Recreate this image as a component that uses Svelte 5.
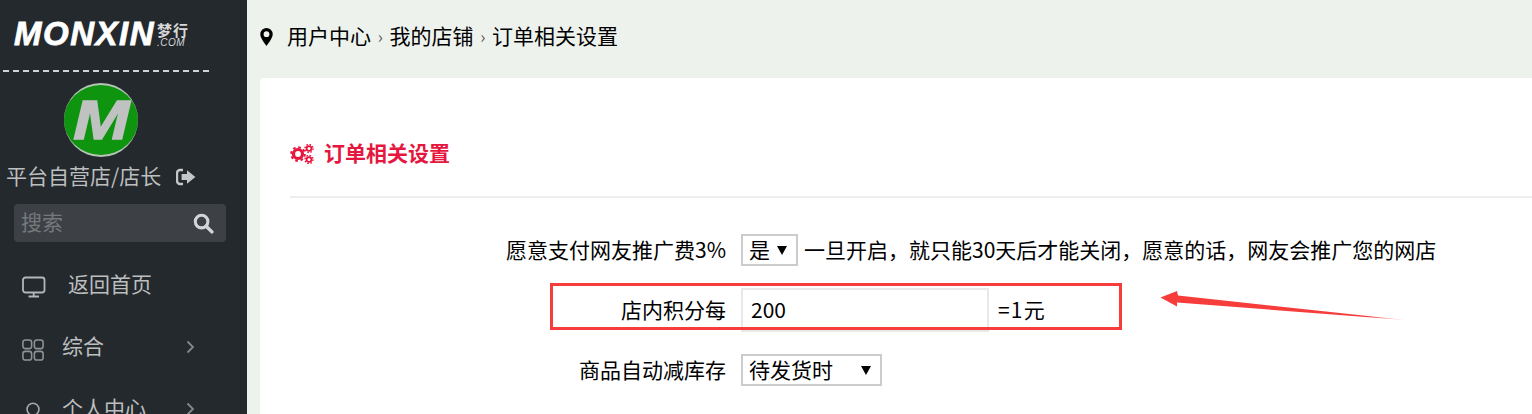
<script lang="ts">
  const nav = [
    { label: '综合', icon: 'grid', arrow: true },
    { label: '个人中心', icon: 'user', arrow: true }
  ];
</script>

<div class="page">
  <aside class="sidebar">
    <div class="logo">
      <span class="logo-word">MONXIN</span>
      <span class="logo-side">
        <span class="logo-cn">梦行</span>
        <span class="logo-com">.COM</span>
      </span>
    </div>
    <div class="dash"></div>
    <div class="avatar"><span>M</span></div>
    <div class="user-row">
      <span>平台自营店/店长</span>
      <svg class="logout" viewBox="0 0 20 18" width="20" height="18" aria-hidden="true">
        <path d="M7 2H4a3 3 0 0 0-3 3v8a3 3 0 0 0 3 3h3" fill="none" stroke="#c4c6c7" stroke-width="2.4" />
        <path d="M11 2.2 19.4 9 11 15.8V12H5.6V6H11z" fill="#c4c6c7" />
      </svg>
    </div>
    <div class="search">
      <span>搜索</span>
      <svg viewBox="0 0 22 22" width="21" height="21" aria-hidden="true">
        <circle cx="9" cy="9" r="6.6" fill="none" stroke="#d4d5d6" stroke-width="3.2" />
        <path d="m13.8 13.8 6 6" stroke="#d4d5d6" stroke-width="3.6" stroke-linecap="round" />
      </svg>
    </div>
    <a class="home" href="#home">
      <svg viewBox="0 0 24 22" width="24" height="22" aria-hidden="true">
        <rect x="1" y="1.5" width="21.5" height="15" rx="2.5" fill="none" stroke="#b4b6b8" stroke-width="1.8" />
        <path d="M11.7 16.5v3.5M6.5 20.5h10.5" stroke="#b4b6b8" stroke-width="1.8" />
      </svg>
      <span>返回首页</span>
    </a>
    {#each nav as item (item.label)}
      <a class="nav-item" href="#{item.icon}">
        {#if item.icon === 'grid'}
          <svg class="nav-icon" viewBox="0 0 24 24" width="22" height="22" aria-hidden="true">
            <g fill="none" stroke="#909396" stroke-width="1.7">
              <rect x="1" y="1" width="9.500" height="9.500" rx="2.500" />
              <rect x="13.500" y="1" width="9.500" height="9.500" rx="2.500" />
              <rect x="1" y="13.500" width="9.500" height="9.500" rx="2.500" />
              <rect x="13.500" y="13.500" width="9.500" height="9.500" rx="2.500" />
            </g>
          </svg>
        {:else}
          <svg class="nav-icon" viewBox="0 0 24 24" width="22" height="22" aria-hidden="true">
            <circle cx="12" cy="9" r="6.5" fill="none" stroke="#a5a7a9" stroke-width="1.8" />
          </svg>
        {/if}
        <span class="nav-label">{item.label}</span>
        <svg class="chevron" viewBox="0 0 9 14" width="9" height="14" aria-hidden="true">
          <path d="m1.5 1.5 5.5 5.5-5.5 5.5" fill="none" stroke="#85888b" stroke-width="1.8" />
        </svg>
      </a>
    {/each}
  </aside>

  <main class="main">
    <nav class="crumbs">
      <svg viewBox="0.800 0 12.400 18" width="13" height="18" aria-hidden="true">
        <path fill-rule="evenodd" d="M7 0a6.2 6.2 0 0 1 6.2 6.2C13.200 10 9 15 7 18 5 15 .8 10 .8 6.200A6.200 6.200 0 0 1 7 0zm0 3.300a2.900 2.900 0 1 0 0 5.800 2.900 2.900 0 0 0 0-5.800z" fill="#000" />
      </svg>
      <span class="crumb-first">用户中心</span>
      <span class="sep">›</span>
      <span>我的店铺</span>
      <span class="sep">›</span>
      <span>订单相关设置</span>
    </nav>

    <section class="card">
      <h2 class="title">
        <svg viewBox="0 0 24 20" width="24" height="20" aria-hidden="true">
          <g fill="none" stroke="#e5173f">
            <circle cx="8" cy="10" r="4.500" stroke-width="3.200" />
            <circle cx="8" cy="10" r="6.800" stroke-width="2" stroke-dasharray="2.700 2.640" />
            <circle cx="19" cy="4.500" r="2.400" stroke-width="1.800" />
            <circle cx="19" cy="4.500" r="4" stroke-width="1.400" stroke-dasharray="1.600 1.540" />
            <circle cx="19" cy="15.500" r="2.400" stroke-width="1.800" />
            <circle cx="19" cy="15.500" r="4" stroke-width="1.400" stroke-dasharray="1.600 1.540" />
          </g>
        </svg>
        <span>订单相关设置</span>
      </h2>

      <div class="form">
        <div class="row row-one">
          <div class="label">愿意支付网友推广费3%</div>
          <div class="value">
            <div class="select select-short">
              <span>是</span>
              <svg viewBox="0 0 10 9" width="10" height="9" aria-hidden="true"><path d="M0 0h10L5 9z" fill="#000" /></svg>
            </div>
            <span class="note">一旦开启，就只能30天后才能关闭，愿意的话，网友会推广您的网店</span>
          </div>
        </div>
        <div class="row row-two">
          <div class="label">店内积分每</div>
          <div class="value">
            <input class="input" type="text" value="200" aria-label="店内积分每" />
            <span class="unit">=1元</span>
          </div>
        </div>
        <div class="row row-three">
          <div class="label">商品自动减库存</div>
          <div class="value">
            <div class="select select-long">
              <span>待发货时</span>
              <svg viewBox="0 0 10 9" width="10" height="9" aria-hidden="true"><path d="M0 0h10L5 9z" fill="#000" /></svg>
            </div>
          </div>
        </div>
      </div>
    </section>
  </main>

  <!-- red annotation drawn over the screenshot -->
  <div class="mark-box"></div>
  <svg class="mark-arrow" viewBox="0 0 250 34" width="250" height="34" aria-hidden="true">
    <defs>
      <linearGradient id="tail" x1="0" x2="1" y1="0" y2="0">
        <stop offset="0.85" stop-color="#f73c3c" />
        <stop offset="1" stop-color="#f73c3c" stop-opacity="0.25" />
      </linearGradient>
    </defs>
    <path d="M0.500 7.500 17 1 18 5.500 245 30 17 12.500 17 16.500z" fill="url(#tail)" />
  </svg>
</div>

<style>
  :global(body) {
    margin: 0;
    overflow: hidden;
  }

  .page {
    position: relative;
    display: flex;
    width: 1532px;
    height: 414px;
    overflow: hidden;
    background: #eef2ed;
    color: #000;
    font-family: "Noto Sans CJK SC", "Liberation Sans", sans-serif;
    font-size: 21px;
  }

  .sidebar {
    flex: 0 0 247px;
    box-sizing: border-box;
    height: 414px;
    overflow: hidden;
    background: #24292d;
    color: #bcbebf;
  }

  .logo {
    display: flex;
    height: 70px;
    box-sizing: border-box;
    padding: 22px 0 0 14px;
    color: #fff;
  }

  .logo-word {
    font-family: "Liberation Sans", sans-serif;
    font-size: 33px;
    font-weight: 700;
    font-style: italic;
    line-height: 24px;
    letter-spacing: 1.500px;
    -webkit-text-stroke: 0.8px #fff;
  }

  .logo-side {
    display: flex;
    flex-direction: column;
    margin-left: 2px;
    color: #d8d8d8;
  }

  .logo-cn {
    font-size: 15px;
    font-weight: 700;
    line-height: 16px;
    letter-spacing: 1px;
  }

  .logo-com {
    font-family: "Liberation Sans", sans-serif;
    font-size: 10px;
    font-style: italic;
    line-height: 9px;
    letter-spacing: 0.5px;
  }

  .dash {
    width: 206px;
    height: 2px;
    margin-left: 3px;
    background: repeating-linear-gradient(90deg, #d0d2d3 0 6px, transparent 6px 10px);
  }

  .avatar {
    display: flex;
    align-items: center;
    justify-content: center;
    box-sizing: border-box;
    width: 74px;
    height: 74px;
    margin: 11px 0 0 64px;
    border-radius: 50%;
    overflow: hidden;
    background: #0f9410;
    border-top: 2px solid #b7c4b7;
    border-bottom: 2px solid #b7c4b7;
  }

  .avatar span {
    font-family: "Liberation Sans", sans-serif;
    font-size: 56px;
    font-weight: 700;
    font-style: italic;
    line-height: 1;
    color: #c0c2c2;
    -webkit-text-stroke: 1.5px #c0c2c2;
    transform: scaleX(1.2);
  }

  .user-row {
    display: flex;
    align-items: center;
    height: 30px;
    margin-top: 3px;
    padding-left: 6px;
    line-height: 30px;
  }

  .logout {
    margin: 4px 0 0 15px;
  }

  .search {
    display: flex;
    align-items: center;
    justify-content: space-between;
    box-sizing: border-box;
    width: 212px;
    height: 38px;
    margin: 14px 0 0 14px;
    padding: 0 12px 0 7px;
    border-radius: 4px;
    background: #3d4146;
    color: #76797c;
  }

  .search span,
  .home span,
  .nav-label,
  .crumbs span {
    padding-bottom: 4px;
  }

  .home,
  .nav-item {
    display: flex;
    align-items: center;
    height: 62px;
    padding-left: 22px;
    color: #bcbebf;
    text-decoration: none;
  }

  .home {
    margin-top: 12px;
  }

  .home svg {
    margin-top: 4px;
  }

  .home span {
    margin-left: 22px;
  }

  .nav-icon {
    margin-top: 6px;
  }

  .nav-label {
    width: 124px;
    margin-left: 18px;
  }

  .main {
    flex: 1;
    min-width: 0;
  }

  .crumbs {
    display: flex;
    align-items: center;
    height: 74px;
    padding-left: 13px;
    color: #000;
  }

  .crumb-first {
    margin-left: 14px;
  }

  .crumbs .sep {
    width: 18.500px;
    font-size: 17px;
    color: #555;
    text-align: center;
  }

  .card {
    box-sizing: border-box;
    height: 336px;
    margin: 4px 0 0 13px;
    padding: 52px 0 0 30px;
    border-radius: 4px 0 0 0;
    background: #fff;
  }

  .title {
    display: flex;
    align-items: center;
    gap: 10px;
    height: 44px;
    margin: 0;
    padding-bottom: 22px;
    border-bottom: 2px solid #eeeeee;
    color: #e5173f;
    font-size: 21px;
    font-weight: 700;
    line-height: 44px;
  }

  .title svg {
    margin-top: 4px;
  }

  .row {
    display: flex;
    align-items: center;
  }

  .row-one {
    height: 32px;
    margin-top: 36px;
  }

  .row-two {
    height: 44px;
    margin-top: 22px;
  }

  .row-three {
    height: 32px;
    margin-top: 22px;
  }

  .label {
    flex: 0 0 436px;
    padding-bottom: 2px;
    text-align: right;
  }

  .value {
    display: flex;
    align-items: center;
    margin-left: 15px;
  }

  .select {
    display: flex;
    align-items: center;
    justify-content: space-between;
    box-sizing: border-box;
    height: 32px;
    padding: 0 9px 0 6px;
    border: 2px solid #cccccc;
    background: #fff;
  }

  .select span {
    padding-bottom: 2px;
  }

  .select-short {
    width: 57px;
  }

  .select-long {
    width: 141px;
  }

  .note {
    margin-left: 6px;
    padding-bottom: 2px;
  }

  .input {
    box-sizing: border-box;
    width: 248px;
    height: 44px;
    padding: 0 8px 2px;
    border: 2px solid #e8e8e8;
    outline: none;
    font: inherit;
    color: #000;
  }

  .unit {
    margin-left: 9px;
    padding-bottom: 2px;
    letter-spacing: 1.200px;
  }

  .mark-box {
    position: absolute;
    left: 550px;
    top: 283px;
    box-sizing: border-box;
    width: 572px;
    height: 47px;
    border: 3px solid #f73c3c;
  }

  .mark-arrow {
    position: absolute;
    left: 1160px;
    top: 290px;
  }
</style>
